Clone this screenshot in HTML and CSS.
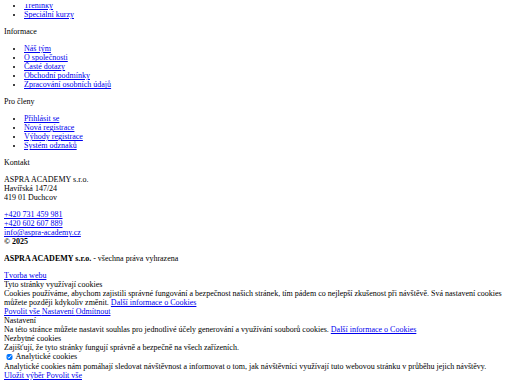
FILE: index.html
```html
<!DOCTYPE html>
<html lang="cs">
<head>
  <meta charset="UTF-8">
  <title>ASPRA ACADEMY</title>
  <meta name="viewport" content="width=device-width, initial-scale=1.0">
  <link rel="stylesheet" href="styles.css">
</head>
<body>

  <footer class="footer">
    <ul class="menu menu-first">
      <li><a href="#">Skupinové lekce</a></li>
      <li><a href="#">Tréninky</a></li>
      <li><a href="#">Speciální kurzy</a></li>
    </ul>

    <p class="menu-title">Informace</p>
    <ul class="menu">
      <li><a href="#">Náš tým</a></li>
      <li><a href="#">O společnosti</a></li>
      <li><a href="#">Časté dotazy</a></li>
      <li><a href="#">Obchodní podmínky</a></li>
      <li><a href="#">Zpracování osobních údajů</a></li>
    </ul>

    <p class="menu-title">Pro členy</p>
    <ul class="menu">
      <li><a href="#">Přihlásit se</a></li>
      <li><a href="#">Nová registrace</a></li>
      <li><a href="#">Výhody registrace</a></li>
      <li><a href="#">Systém odznaků</a></li>
    </ul>

    <p class="menu-title">Kontakt</p>
    <p class="address">ASPRA ACADEMY s.r.o.<br>Havířská 147/24<br>419 01 Duchcov</p>
    <p class="contacts">
      <a href="tel:+420731459981">+420 731 459 981</a><br>
      <a href="tel:+420602607889">+420 602 607 889</a><br>
      <a href="mailto:info@aspra-academy.cz">info@aspra-academy.cz</a><br>
      <strong>© 2025</strong>
    </p>
    <p class="copyright"><strong>ASPRA ACADEMY s.r.o.</strong> - všechna práva vyhrazena</p>
    <a href="#" class="credit">Tvorba webu</a>
  </footer>

  <!-- cookie lišta bez stylů -->
  <div class="cookies">
    <div class="cookies-title">Tyto stránky využívají cookies</div>
    <div class="cookies-text">Cookies používáme, abychom zajistili správné fungování a bezpečnost našich stránek, tím pádem co nejlepší zkušenost při návštěvě. Svá nastavení cookies můžete později kdykoliv změnit. <a href="#">Další informace o Cookies</a></div>
    <div class="cookies-buttons"><a href="#">Povolit vše </a><a href="#">Nastavení </a><a href="#">Odmítnout</a></div>

    <div class="cookies-settings">
      <div class="cookies-title">Nastavení</div>
      <div class="cookies-text">Na této stránce můžete nastavit souhlas pro jednotlivé účely generování a využívání souborů cookies. <a href="#">Další informace o Cookies</a></div>
      <div class="cookies-title">Nezbytné cookies</div>
      <div class="cookies-text">Zajišťují, že tyto stránky fungují správně a bezpečně na všech zařízeních.</div>
      <label class="cookies-check"><input type="checkbox" checked> Analytické cookies</label>
      <div class="cookies-text">Analytické cookies nám pomáhají sledovat návštěvnost a informovat o tom, jak návštěvníci využívají tuto webovou stránku v průběhu jejich návštěvy.</div>
      <div class="cookies-buttons"><a href="#">Uložit výběr </a><a href="#">Povolit vše</a></div>
    </div>
  </div>

</body>
</html>
```

FILE: styles.css
```css
body {
  margin: 4px;
  font-family: "Liberation Serif", serif;
  font-size: 8px;
  color: #000;
  background-color: #fff;
}
a {
  color: #0000ee;
}
p {
  margin: 8px 0;
}
.menu {
  margin: 8px 0;
  padding-left: 20px;
}
.menu-first {
  margin-top: -11.8px; /* stránka je odscrollovaná dolů */
}
.credit {
  display: block;
}
.cookies-check {
  display: block;
}
.cookies-check input {
  width: 6.5px;
  height: 6.5px;
  margin: 1.5px 1.5px 1.5px 2px;
  vertical-align: -1px;
}
```
